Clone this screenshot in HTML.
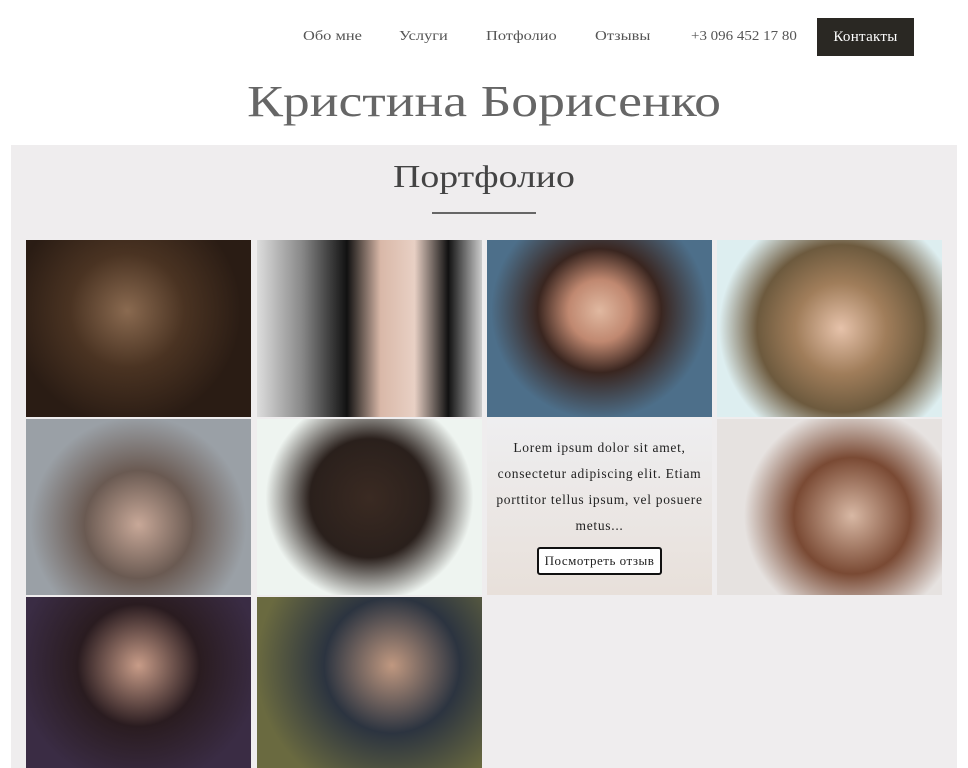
<!DOCTYPE html>
<html><head><meta charset="utf-8"><style>
*{margin:0;padding:0;box-sizing:border-box}
body{width:968px;height:768px;overflow:hidden;background:#fff;font-family:"Liberation Serif",serif;position:relative}
.nav a{position:absolute;top:29px;font-size:14px;color:#555;text-decoration:none;transform:scaleX(1.17);transform-origin:left}
.btn{position:absolute;left:817px;top:18px;width:97px;height:38px;background:#2a2823;color:#fff;font-size:15px;text-align:center;line-height:38px;letter-spacing:0.3px}
h1{position:absolute;top:76px;left:0;width:968px;text-align:center;font-weight:normal;font-size:44px;color:#666;transform:scaleX(1.22)}
.sec{position:absolute;left:11px;top:145px;width:946px;height:623px;background:#efedee}
h2{position:absolute;top:158px;left:0;width:968px;text-align:center;font-weight:normal;font-size:32px;color:#444;transform:scaleX(1.18)}
.line{position:absolute;left:432px;top:212px;width:104px;height:2px;background:#666}
.c{position:absolute;width:225px}
.ov{background:linear-gradient(#eeeef0,#e8e0da);text-align:center;font-size:13.5px;line-height:26px;color:#222;padding:16px 2px 0;letter-spacing:0.7px}
.ov span{display:inline-block;margin-top:8px;border:2px solid #111;border-radius:3px;background:#fff;padding:0 6px;line-height:24px;font-size:13px;letter-spacing:0.5px}
</style></head><body>
<div class="nav">
<a style="left:303px">Обо мне</a><a style="left:399px">Услуги</a><a style="left:486px">Потфолио</a><a style="left:595px">Отзывы</a><a style="left:691px;transform:scaleX(1.07)">+3 096 452 17 80</a>
</div>
<div class="btn">Контакты</div>
<h1>Кристина Борисенко</h1>
<div class="sec"></div>
<h2>Портфолио</h2>
<div class="line"></div>
<div class="c" style="left:26px;top:240px;height:177px;background:radial-gradient(circle at 45% 40%,#8a6a50 0,#4a3322 35%,#2a1c14 70%)"></div>
<div class="c" style="left:257px;top:240px;height:177px;background:linear-gradient(90deg,#ddd 0,#888 20%,#111 40%,#d9b8a8 55%,#e8d0c4 70%,#111 85%,#ccc 100%)"></div>
<div class="c" style="left:487px;top:240px;height:177px;background:radial-gradient(circle at 50% 40%,#e0b8a0 0,#c08870 20%,#3a2620 40%,#4d6f8a 70%)"></div>
<div class="c" style="left:717px;top:240px;height:177px;background:radial-gradient(circle at 55% 50%,#e6c2aa 0,#a07d5a 30%,#6d5a3e 55%,#ddeef0 80%)"></div>
<div class="c" style="left:26px;top:419px;height:176px;background:radial-gradient(circle at 50% 60%,#c8a898 0,#6a5a52 35%,#9aa0a6 70%)"></div>
<div class="c" style="left:257px;top:419px;height:176px;background:radial-gradient(circle at 50% 45%,#3a2a22 0,#2a201c 40%,#eef4f0 70%)"></div>
<div class="c ov" style="left:487px;top:419px;height:176px">Lorem ipsum dolor sit amet, consectetur adipiscing elit. Etiam porttitor tellus ipsum, vel posuere metus...<br><span>Посмотреть отзыв</span></div>
<div class="c" style="left:717px;top:419px;height:176px;background:radial-gradient(circle at 60% 55%,#d8b8a4 0,#7a4a34 35%,#e6e2e0 65%)"></div>
<div class="c" style="left:26px;top:597px;height:171px;background:radial-gradient(circle at 50% 40%,#c89c88 0,#2a1c20 40%,#3a2c44 80%)"></div>
<div class="c" style="left:257px;top:597px;height:171px;background:radial-gradient(circle at 60% 40%,#c09880 0,#2c3440 40%,#6a6a40 80%)"></div>
</body></html>
